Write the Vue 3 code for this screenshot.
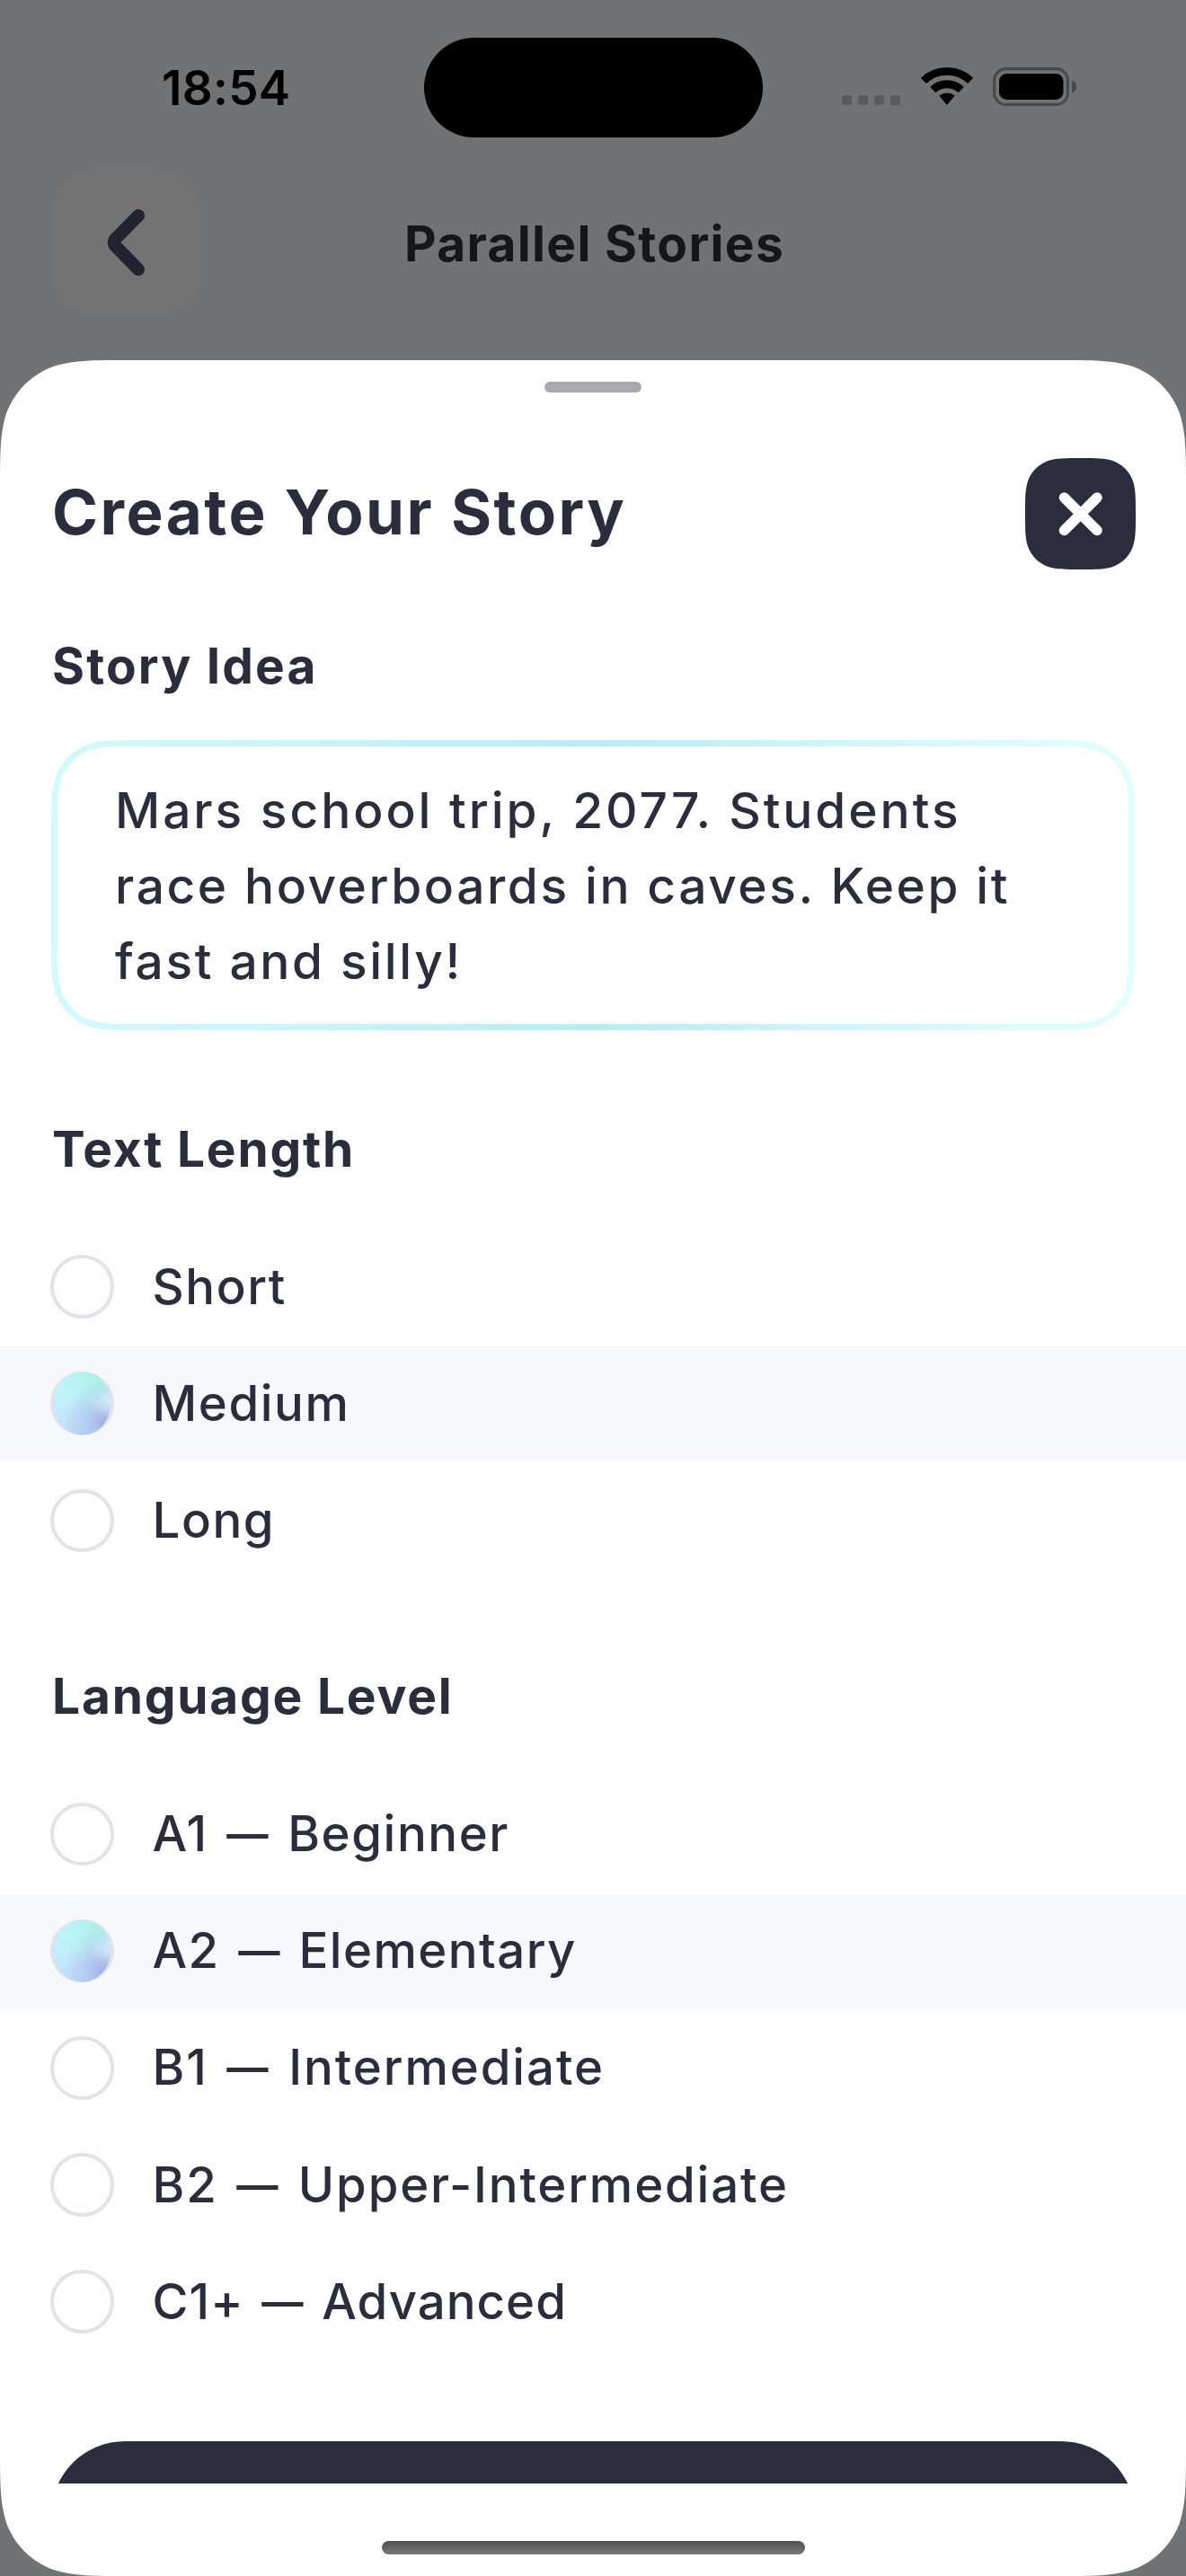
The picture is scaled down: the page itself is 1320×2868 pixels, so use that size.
<script setup>
import { ref } from 'vue'

const idea = ['Mars school trip, 2077. Students', 'race hoverboards in caves. Keep it', 'fast and silly!']
const lengths = ['Short', 'Medium', 'Long']
const levels = [
  { code: 'A1', name: 'Beginner', tracking: 1.6 },
  { code: 'A2', name: 'Elementary', tracking: 1.45 },
  { code: 'B1', name: 'Intermediate', tracking: 1.95 },
  { code: 'B2', name: 'Upper-Intermediate', tracking: 1.88 },
  { code: 'C1+', name: 'Advanced', tracking: 1.05 },
]
const length = ref('Medium')
const level = ref('A2')

// Rounded rectangle with continuous (smoothed) corners.
function smoothRect(x, y, w, h, r) {
  const a = 1.528665 * r
  const b = 1.088493 * r
  const c = 0.868407 * r
  const d = 0.631494 * r
  const e = 0.074911 * r
  const f = 0.372824 * r
  const g = 0.169059 * r
  const R = x + w
  const B = y + h
  return [
    `M${x + a} ${y}L${R - a} ${y}`,
    `C${R - b} ${y} ${R - c} ${y} ${R - d} ${y + e}`,
    `C${R - f} ${y + g} ${R - g} ${y + f} ${R - e} ${y + d}`,
    `C${R} ${y + c} ${R} ${y + b} ${R} ${y + a}`,
    `L${R} ${B - a}`,
    `C${R} ${B - b} ${R} ${B - c} ${R - e} ${B - d}`,
    `C${R - g} ${B - f} ${R - f} ${B - g} ${R - d} ${B - e}`,
    `C${R - c} ${B} ${R - b} ${B} ${R - a} ${B}`,
    `L${x + a} ${B}`,
    `C${x + b} ${B} ${x + c} ${B} ${x + d} ${B - e}`,
    `C${x + f} ${B - g} ${x + g} ${B - f} ${x + e} ${B - d}`,
    `C${x} ${B - c} ${x} ${B - b} ${x} ${B - a}`,
    `L${x} ${y + a}`,
    `C${x} ${y + b} ${x} ${y + c} ${x + e} ${y + d}`,
    `C${x + g} ${y + f} ${x + f} ${y + g} ${x + d} ${y + e}`,
    `C${x + c} ${y} ${x + b} ${y} ${x + a} ${y}Z`,
  ].join('')
}

const sheetClip = { clipPath: `path("${smoothRect(0, 0, 1320, 2467, 94)}")` }
const fieldPath = smoothRect(3.5, 3.5, 1199, 316, 61)
const closePath = smoothRect(0, 0, 123, 124, 40.3)
</script>

<template>
  <div class="screen">
    <div class="status">
      <span class="time">18:54</span>
      <span class="island"></span>
      <div class="indicators">
        <div class="cell"><i v-for="n in 4" :key="n"></i></div>
        <svg class="wifi" width="58" height="42" viewBox="0 0 58 42" fill="none" stroke="#000">
          <path d="M2.9 14.95A37.6 37.6 0 0 1 55.1 14.95" stroke-width="8.8" />
          <path d="M13.2 25A23.2 23.2 0 0 1 44.8 25" stroke-width="9" />
          <path d="M29 42L20.3 31.6A13.6 13.6 0 0 1 37.7 31.6Z" fill="#000" stroke="none" />
        </svg>
        <svg class="battery" width="94" height="43" viewBox="0 0 94 43">
          <rect x="1.6" y="1.6" width="81.8" height="39.8" rx="13" fill="none" stroke="#48494a" stroke-width="3.2" />
          <rect x="7" y="7" width="71.5" height="29" rx="8.5" fill="#000" />
          <path d="M88 14.500C91.500 15.500 93.200 18.300 93.200 21.500S91.500 27.500 88 28.500Z" fill="#48494a" />
        </svg>
      </div>
    </div>

    <header class="nav">
      <button class="back" aria-label="Back">
        <svg width="44" height="76" viewBox="0 0 44 76" fill="none" stroke="#1f2430" stroke-width="14" stroke-linecap="round" stroke-linejoin="round">
          <path d="M36 8L10.500 34Q7 38 10.500 42L36 68" />
        </svg>
      </button>
      <span class="nav-title">Parallel Stories</span>
    </header>

    <main class="sheet" :style="sheetClip">
      <div class="grabber"></div>
      <div class="scroll">
        <div class="head">
          <h1>Create Your Story</h1>
          <button class="close" aria-label="Close">
            <svg width="123" height="124" viewBox="0 0 123 124">
              <path :d="closePath" fill="#2b2d3c" />
              <path d="M43.500 44L80 80.500M80 44L43.500 80.500" stroke="#fff" stroke-width="11.500" stroke-linecap="round" />
            </svg>
          </button>
        </div>

        <h2 class="t-idea">Story Idea</h2>
        <div class="field">
          <svg class="outline" width="1206" height="323" viewBox="0 0 1206 323" fill="none">
            <defs>
              <linearGradient id="edge" x1="0" y1="0" x2="1206" y2="0" gradientUnits="userSpaceOnUse">
                <stop offset="0" stop-color="#d3fafd" />
                <stop offset="0.2" stop-color="#cbf5fa" />
                <stop offset="0.5" stop-color="#b9ebf4" />
                <stop offset="0.75" stop-color="#d2f6fa" />
                <stop offset="1" stop-color="#e3fefe" />
              </linearGradient>
            </defs>
            <path :d="fieldPath" stroke="url(#edge)" stroke-width="7" />
          </svg>
          <p v-for="(line, i) in idea" :key="i" :class="'line l' + i">{{ line }}</p>
        </div>

        <h2 class="t-length">Text Length</h2>
        <div class="options">
          <label v-for="item in lengths" :key="item" class="option" :class="{ active: length === item }" @click="length = item">
            <span class="radio"><i></i></span>
            <span class="label">{{ item }}</span>
          </label>
        </div>

        <h2 class="t-level">Language Level</h2>
        <div class="options levels">
          <label v-for="item in levels" :key="item.code" class="option" :class="{ active: level === item.code }" @click="level = item.code">
            <span class="radio"><i></i></span>
            <span class="label" :style="{ letterSpacing: item.tracking + 'px' }">{{ item.code }} <span class="dash">—</span> {{ item.name }}</span>
          </label>
        </div>

        <button class="submit" aria-label="Create"></button>
      </div>
      <div class="home"></div>
    </main>
  </div>
</template>

<style>
body {
  background: #717274;
}
</style>

<style scoped>
.screen {
  width: 1320px;
  height: 2868px;
  overflow: hidden;
  display: flex;
  flex-direction: column;
  background: #717274;
  color: #2b2d3c;
  font-family: Inter, "Liberation Sans", sans-serif;
}
button {
  border: 0;
  padding: 0;
  background: none;
}
h1,
h2,
p {
  margin: 0;
  white-space: nowrap;
}
.status {
  height: 190px;
  display: grid;
  grid-template-columns: 471.5px 377px 1fr;
  flex: none;
}
.time {
  padding: 68px 0 0 180px;
  font-size: 53px;
  line-height: 60px;
  font-weight: 600;
  letter-spacing: 0.3px;
  color: #000;
}
.island {
  margin-top: 41.5px;
  height: 111px;
  border-radius: 56px;
  background: #000;
}
.indicators {
  display: flex;
  align-items: flex-start;
  padding: 75px 0 0 88.500px;
}
.cell {
  display: flex;
  gap: 7px;
  margin-top: 31px;
}
.cell i {
  width: 11px;
  height: 11px;
  border-radius: 3px;
  background: #5a5b5d;
}
.wifi {
  margin-left: 22.500px;
}
.battery {
  margin-left: 22.500px;
}
.nav {
  height: 211px;
  flex: none;
  display: grid;
  grid-template-columns: 220px 1fr 220px;
}
.back {
  margin-left: 60px;
  width: 160px;
  height: 159px;
  border-radius: 46px;
  background: #747373;
  display: flex;
  align-items: center;
  justify-content: center;
}
.nav-title {
  text-align: center;
  padding-left: 3px;
  font-size: 55px;
  line-height: 60px;
  margin-top: 51px;
  font-weight: 700;
  letter-spacing: 1.35px;
  color: #15161b;
}
.sheet {
  height: 2467px;
  flex: none;
  background: #fefefe;
  display: flex;
  flex-direction: column;
}
.grabber {
  width: 108px;
  height: 12px;
  border-radius: 6px;
  background: #a9a9af;
  margin: 24px auto 0;
  flex: none;
}
.scroll {
  height: 2328px;
  flex: none;
  overflow: hidden;
}
.head {
  display: flex;
  justify-content: space-between;
  padding: 73px 56.500px 0 58px;
}
.close {
  width: 123px;
  height: 124px;
}
.close svg {
  display: block;
}
h1 {
  font-size: 69px;
  line-height: 121px;
  height: 124px;
  font-weight: 700;
  letter-spacing: 2.5px;
}
h2 {
  font-size: 55px;
  line-height: 60px;
  font-weight: 700;
  letter-spacing: 1.8px;
  padding-left: 58px;
}
.t-idea {
  margin-top: 77px;
  letter-spacing: 2.15px;
}
.field {
  position: relative;
  width: 1206px;
  height: 323px;
  box-sizing: border-box;
  margin: 53px 0 0 57px;
  padding: 36px 0 0 71px;
}
.outline {
  position: absolute;
  left: 0;
  top: 0;
}
.line {
  position: relative;
  font-size: 55px;
  line-height: 84px;
  font-weight: 500;
}
.l0 {
  letter-spacing: 2.97px;
}
.l1 {
  letter-spacing: 2.6px;
}
.l2 {
  letter-spacing: 2.65px;
}
.t-length {
  margin-top: 102px;
}
.t-level {
  margin-top: 101.600px;
}
.options {
  margin-top: 60px;
  display: flex;
  flex-direction: column;
  gap: 3.2px;
}
.levels {
  margin-top: 60.5px;
}
.option {
  height: 127px;
  display: flex;
  align-items: center;
  padding-left: 56px;
}
.active {
  background: #f6f8fc;
}
.radio {
  width: 70.500px;
  height: 70.500px;
  box-sizing: border-box;
  border-radius: 50%;
  border: 4px solid #e0e3e8;
  overflow: hidden;
  display: flex;
  justify-content: center;
}
.active .radio {
  border: 0;
  background: #dfe4ec;
}
.active .radio i {
  width: 63.500px;
  height: 100%;
  border-radius: 50%;
  background:
    radial-gradient(ellipse 42% 24% at 102% 46%, rgba(222, 234, 251, 0.9) 0%, rgba(215, 230, 250, 0) 100%),
    radial-gradient(circle at 90% 82%, #a6b0e2 0%, rgba(172, 190, 234, 0.7) 24%, rgba(185, 215, 245, 0) 58%),
    radial-gradient(circle at 82% 14%, #acefe6 0%, rgba(180, 242, 240, 0) 45%),
    linear-gradient(195deg, #b8f5f3 0%, #bef4fb 42%, #c4e8fd 72%, #c2dbfa 100%);
}
.label {
  margin: -2px 0 0 43px;
  font-size: 54.5px;
  line-height: 84px;
  font-weight: 500;
  letter-spacing: 1.6px;
  white-space: nowrap;
}
.dash {
  display: inline-block;
  transform: scaleX(0.85);
}
.submit {
  display: block;
  width: 1206px;
  height: 164px;
  margin: 91.700px 0 0 57px;
  border-radius: 82px;
  background: #2b2d3c;
}
.home {
  flex: none;
  width: 471px;
  height: 15px;
  border-radius: 8px;
  margin: 64px auto 0;
  background: linear-gradient(#4e4e4e, #7a7a7a);
}
</style>
